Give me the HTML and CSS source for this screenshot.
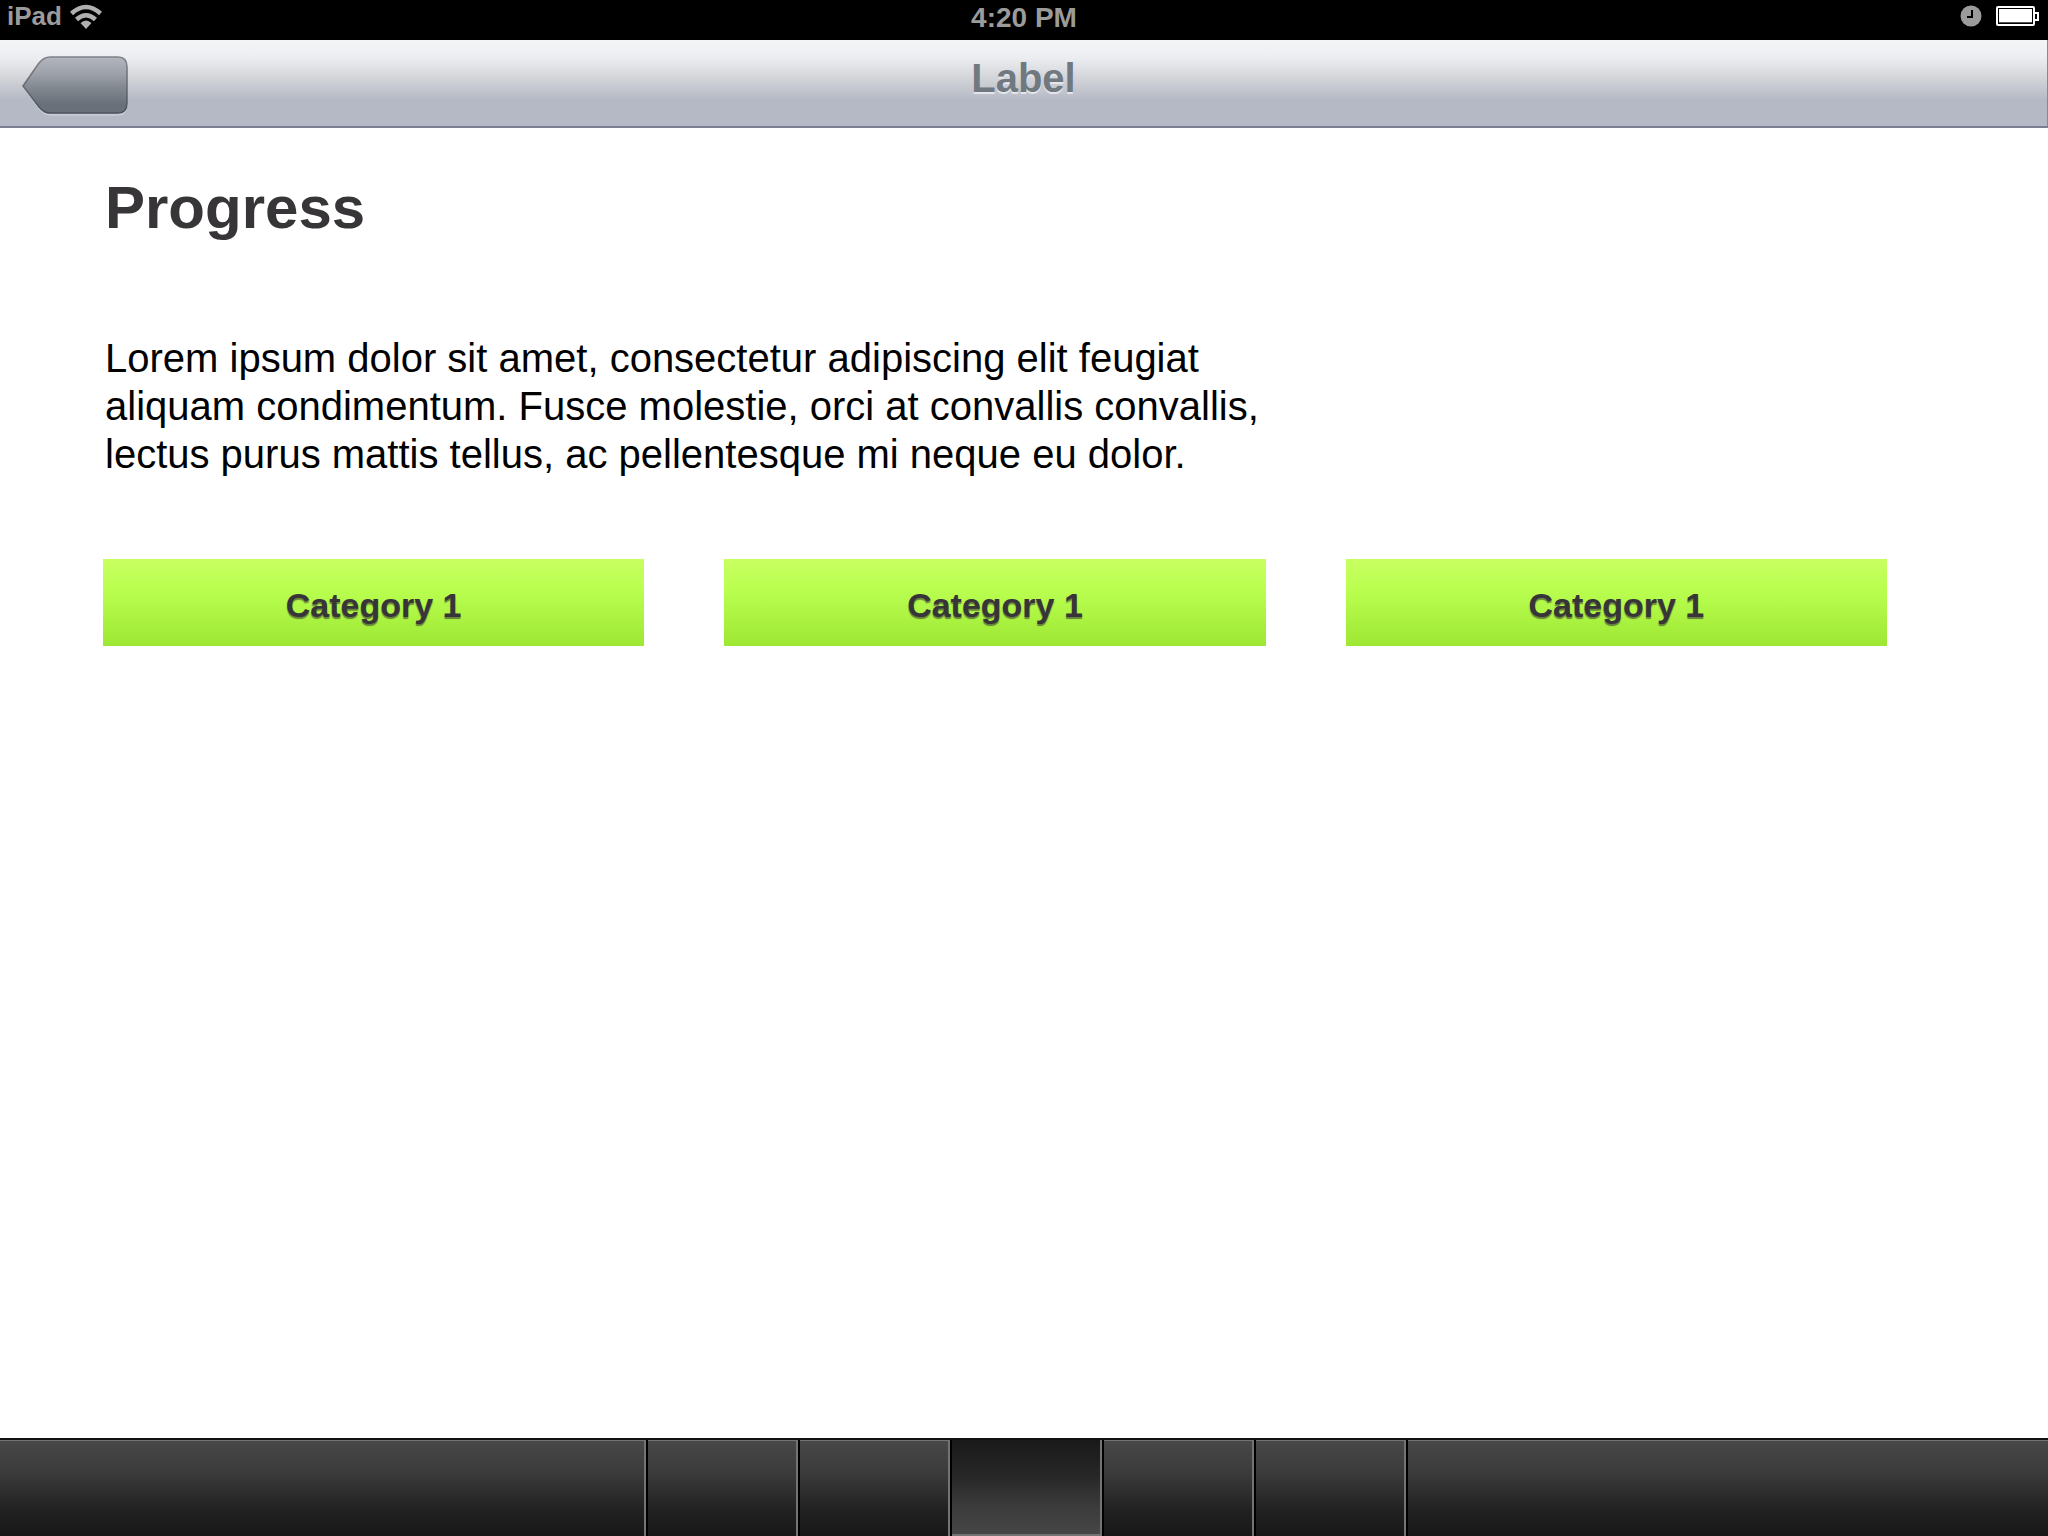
FILE: index.html
```html
<!DOCTYPE html>
<html lang="en">
<head>
<meta charset="utf-8">
<meta name="viewport" content="width=device-width, initial-scale=1">
<title>Progress</title>
<link rel="stylesheet" href="styles.css">
</head>
<body>
<div class="status">
  <div class="status-left">
    <span class="device">iPad</span>
    <svg class="wifi" width="34" height="26" viewBox="0 0 34 26" aria-hidden="true">
      <g fill="none" stroke="#b0b0b0" stroke-width="4.500">
        <path d="M2.500 9.500 Q17 -3.500 31.500 9.500"/>
        <path d="M7.500 15.500 Q17 7 26.500 15.500"/>
      </g>
      <path d="M11.500 19 Q17 14 22.500 19 L17 25 Z" fill="#b0b0b0"/>
    </svg>
  </div>
  <time class="clock">4:20 PM</time>
  <div class="status-right">
    <svg width="22" height="22" viewBox="0 0 22 22" aria-hidden="true">
      <circle cx="11" cy="11" r="10.500" fill="#9b9b9b"/>
      <path d="M12 5v7H7" fill="none" stroke="#000" stroke-width="2"/>
    </svg>
    <svg width="43" height="22" viewBox="0 0 43 22" aria-hidden="true">
      <rect x="1" y="2" width="37" height="18" rx="1" fill="#000" stroke="#fff" stroke-width="2"/>
      <rect x="3" y="4" width="33" height="14" fill="#fff"/>
      <rect x="3" y="17" width="33" height="1" fill="#555"/>
      <path d="M38 8h4v7h-4" fill="none" stroke="#fff" stroke-width="2"/>
    </svg>
  </div>
</div>

<header class="navbar">
  <button class="back" type="button" aria-label="Back">
    <svg width="108" height="60" viewBox="0 0 108 60" aria-hidden="true">
      <defs>
        <linearGradient id="back-fill" x1="0" y1="0" x2="0" y2="1">
          <stop offset="0" stop-color="#b3b6be"/>
          <stop offset=".3" stop-color="#9da1aa"/>
          <stop offset=".55" stop-color="#828890"/>
          <stop offset=".85" stop-color="#69707a"/>
          <stop offset="1" stop-color="#69717b"/>
        </linearGradient>
        <linearGradient id="back-edge" x1="0" y1="0" x2="0" y2="1">
          <stop offset="0" stop-color="#808088"/>
          <stop offset="1" stop-color="#4a525c"/>
        </linearGradient>
      </defs>
      <path d="M28 2H96Q105 2 105 12V49Q105 59 96 59H28Q22 59 17 53L1 31L17 8Q22 2 28 2Z" fill="none" stroke="#d2d5dd" stroke-width="1"/>
      <path d="M28 1H96Q105 1 105 11V47Q105 57 96 57H28Q22 57 17 51L1 30L17 7Q22 1 28 1Z" fill="url(#back-fill)" stroke="url(#back-edge)" stroke-width="1.500"/>
    </svg>
  </button>
  <div class="title">Label</div>
</header>

<main class="content">
  <h1>Progress</h1>
  <p class="intro">Lorem ipsum dolor sit amet, consectetur adipiscing elit feugiat aliquam condimentum. Fusce molestie, orci at convallis convallis, lectus purus mattis tellus, ac pellentesque mi neque eu dolor.</p>
  <div class="categories">
    <button class="category" type="button">Category 1</button>
    <button class="category" type="button">Category 1</button>
    <button class="category" type="button">Category 1</button>
  </div>
</main>

<nav class="tabbar" aria-label="Sections">
  <div class="tab"></div>
  <button class="tab" type="button" aria-label="Tab 1"></button>
  <button class="tab" type="button" aria-label="Tab 2"></button>
  <button class="tab active" type="button" aria-label="Tab 3" aria-current="page"></button>
  <button class="tab" type="button" aria-label="Tab 4"></button>
  <button class="tab" type="button" aria-label="Tab 5"></button>
  <div class="tab last"></div>
</nav>
</body>
</html>
```
FILE: styles.css
```css
* {
  box-sizing: border-box;
}

body {
  margin: 0;
  min-height: 100vh;
  display: flex;
  flex-direction: column;
  background: #fff;
  color: #000;
  font-family: "Liberation Sans", Arial, Helvetica, sans-serif;
}

button {
  margin: 0;
  padding: 0;
  border: 0;
  background: none;
  font-family: inherit;
}

svg {
  display: block;
}

/* Status bar */
.status {
  display: grid;
  grid-template-columns: 1fr auto 1fr;
  height: 40px;
  padding: 0 7px;
  background: #000;
  color: #9b9b9b;
  font-weight: bold;
}

.status-left,
.status-right {
  display: flex;
  align-items: flex-start;
  padding-top: 4px;
}

.status-left {
  gap: 7px;
}

.status-right {
  gap: 14px;
  justify-content: flex-end;
  padding: 5px 2px 0 0;
}

.device {
  font-size: 26px;
  line-height: 24px;
}

.clock {
  font-size: 28px;
  line-height: 36px;
}

/* Navigation bar */
.navbar {
  display: grid;
  grid-template-columns: 1fr auto 1fr;
  height: 88px;
  padding: 16px 22px 0;
  border-right: 1px solid #85879a;
  border-bottom: 2px solid #7c7d91;
  background: linear-gradient(#f4f5f6 0, #ecedf1 18px, #d6d7db 36px, #b5b9c5 60px, #b5b9c5 100%);
}

.back {
  justify-self: start;
  align-self: start;
}

.title {
  color: #707880;
  font-size: 40px;
  font-weight: bold;
  line-height: 44px;
  text-shadow: 0 2px 0 #e4e6ec;
}

/* Content */
.content {
  flex: 1;
  padding: 46px 161px 46px 103px;
}

h1 {
  margin: 0 2px;
  color: #373538;
  font-size: 60px;
  line-height: 68px;
}

.intro {
  max-width: 1200px;
  margin: 92px 2px 0;
  font-size: 40px;
  line-height: 48px;
}

.categories {
  display: grid;
  grid-template-columns: repeat(3, 1fr);
  gap: 80px;
  margin-top: 81px;
}

.category {
  height: 87px;
  padding-top: 6px;
  background: linear-gradient(#c8ff60, #baff50 35%, #9ee733);
  color: #373538;
  font-size: 34px;
  font-weight: bold;
  text-shadow: 0 2px 1px rgba(55, 53, 56, 0.6);
}

/* Tab bar */
.tabbar {
  display: grid;
  grid-template-columns: minmax(0, 648fr) repeat(5, 152px) minmax(0, 640fr);
  height: 98px;
  border-top: 2px solid #121012;
  background: #000;
}

.tab {
  margin-right: 2px;
  border-top: 1px solid #747274;
  border-right: 2px solid #747274;
  background: linear-gradient(#484848, #3a3a3a 35%, #202020 75%, #181818);
}

.tab.active {
  border-top: 0;
  border-bottom: 2px solid #747274;
  background: linear-gradient(#191919, #282828 40%, #3b3b3b 70%, #464646);
}

.tab.last {
  margin-right: 0;
  border-right: 0;
}
```
